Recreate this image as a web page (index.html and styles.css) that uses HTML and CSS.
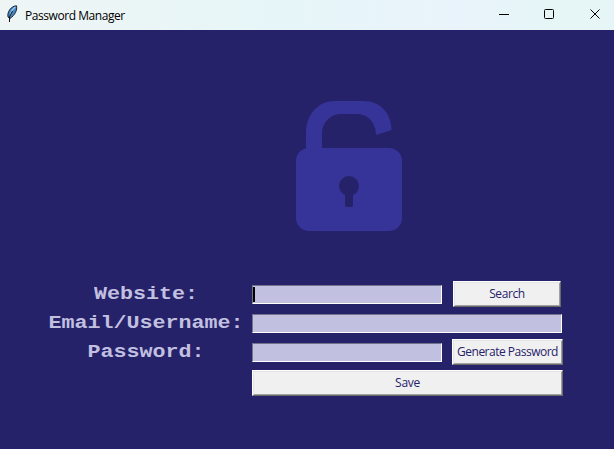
FILE: index.html
```html
<!DOCTYPE html>
<html lang="en">
<head>
<meta charset="utf-8">
<title>Password Manager</title>
<link rel="stylesheet" href="styles.css">
</head>
<body>
<div class="window">
  <header class="titlebar">
    <svg class="feather" width="12" height="18" viewBox="0 0 12 18">
      <path d="M2 12C1 7 5 1 10.500 .8C11.500 5 9 10 4 13.500Z" fill="#4789c9" stroke="#18212b" stroke-width="1"/>
      <path d="M4.500 10C5 6 7 3.500 9.500 2" fill="none" stroke="#9fcbee" stroke-width="1.300"/>
      <path d="M6.500 6L3.500 12L3.500 17" fill="none" stroke="#111" stroke-width="1"/>
    </svg>
    <h1 class="title">Password Manager</h1>
    <svg class="controls" width="104" height="12" viewBox="0 0 104 12" fill="none" stroke="#000">
      <path d="M1 6.500H11"/>
      <rect x="46.500" y="1.500" width="9" height="9" rx="1"/>
      <path d="M92.500 1.500L101.500 10.500M101.500 1.500L92.500 10.500"/>
    </svg>
  </header>
  <main class="content">
    <svg class="lock" width="108" height="132" viewBox="0 0 108 132">
      <path class="metal" d="M10 60V33C10 15 22 1 38 1H68C84 1 95.500 13 95.500 30L80 35C80 23 72 14 61 14H45C34 14 26 23 26 34V60Z"/>
      <rect class="metal" y="48" width="106" height="83" rx="13"/>
      <circle class="hole" cx="53" cy="86" r="10"/>
      <rect class="hole" x="49" y="91" width="8" height="16" rx="2"/>
    </svg>
    <form class="form">
      <label class="label" for="website">Website:</label>
      <div class="entry focused" id="website"><span class="caret"></span></div>
      <button class="button search" type="button"><span>Search</span></button>
      <label class="label" for="email">Email/Username:</label>
      <div class="entry wide" id="email"></div>
      <label class="label" for="password">Password:</label>
      <div class="entry" id="password"></div>
      <button class="button generate" type="button"><span>Generate Password</span></button>
      <button class="button save" type="button"><span>Save</span></button>
    </form>
  </main>
</div>
</body>
</html>
```
FILE: styles.css
```css
* { box-sizing: border-box; }
body { margin: 0; background: #26226a; }
.window { width: 614px; height: 449px; overflow: hidden; }
.titlebar {
  height: 30px;
  display: flex;
  align-items: center;
  padding: 0 12px 0 6px;
  background: linear-gradient(90deg, #eff5f5, #e6f6f8 45%, #e9f3fb 75%, #e6f6f7 88%);
}
.title {
  margin: 1px auto 0 7px;
  font: 12px/16px "Open Sans", "Noto Sans", sans-serif;
  letter-spacing: -0.44px;
  color: #000;
}
.feather { margin-top: -2px; }
.controls { margin-top: -2px; }
.content {
  height: 419px;
  padding-top: 70px;
  background: #26226a;
}
.lock { display: block; margin-left: 296px; }
.metal { fill: #363399; }
.hole { fill: #26226a; }
.form {
  display: grid;
  grid-template-columns: 196px 190px 111px;
  grid-template-rows: 29px 29px 29px 32px;
  column-gap: 10px;
  align-items: center;
  margin: 48px 0 0 46px;
}
.label {
  justify-self: center;
  padding-left: 4px;
  font: bold 21.67px/26px "Courier New", "Liberation Mono", monospace;
  color: #c2c0e0;
  white-space: nowrap;
  transform: scaleY(0.86);
}
.entry {
  height: 19px;
  padding: 1px 0;
  background: #c2c0e0;
  border: 1px solid;
  border-color: #74728a #fff #fff #74728a;
}
.wide { grid-column: 2 / 4; width: 310px; }
.caret { display: block; width: 2px; height: 15px; background: #000; }
.button {
  height: 26px;
  padding: 0;
  border: 1px solid;
  border-color: #fff #696969 #696969 #fff;
  box-shadow: inset 1px 1px #e3e3e3, inset -1px -1px #a0a0a0;
  background: #f0f0f0;
  color: #26226a;
  font: 12px/16px "Open Sans", "Noto Sans", sans-serif;
  letter-spacing: -0.5px;
  white-space: nowrap;
}
.search { width: 108px; margin: 0 0 2px 1px; letter-spacing: -0.4px; }
.generate { margin-bottom: 2px; }
.save { grid-column: 2 / 4; letter-spacing: -0.3px; }
```
